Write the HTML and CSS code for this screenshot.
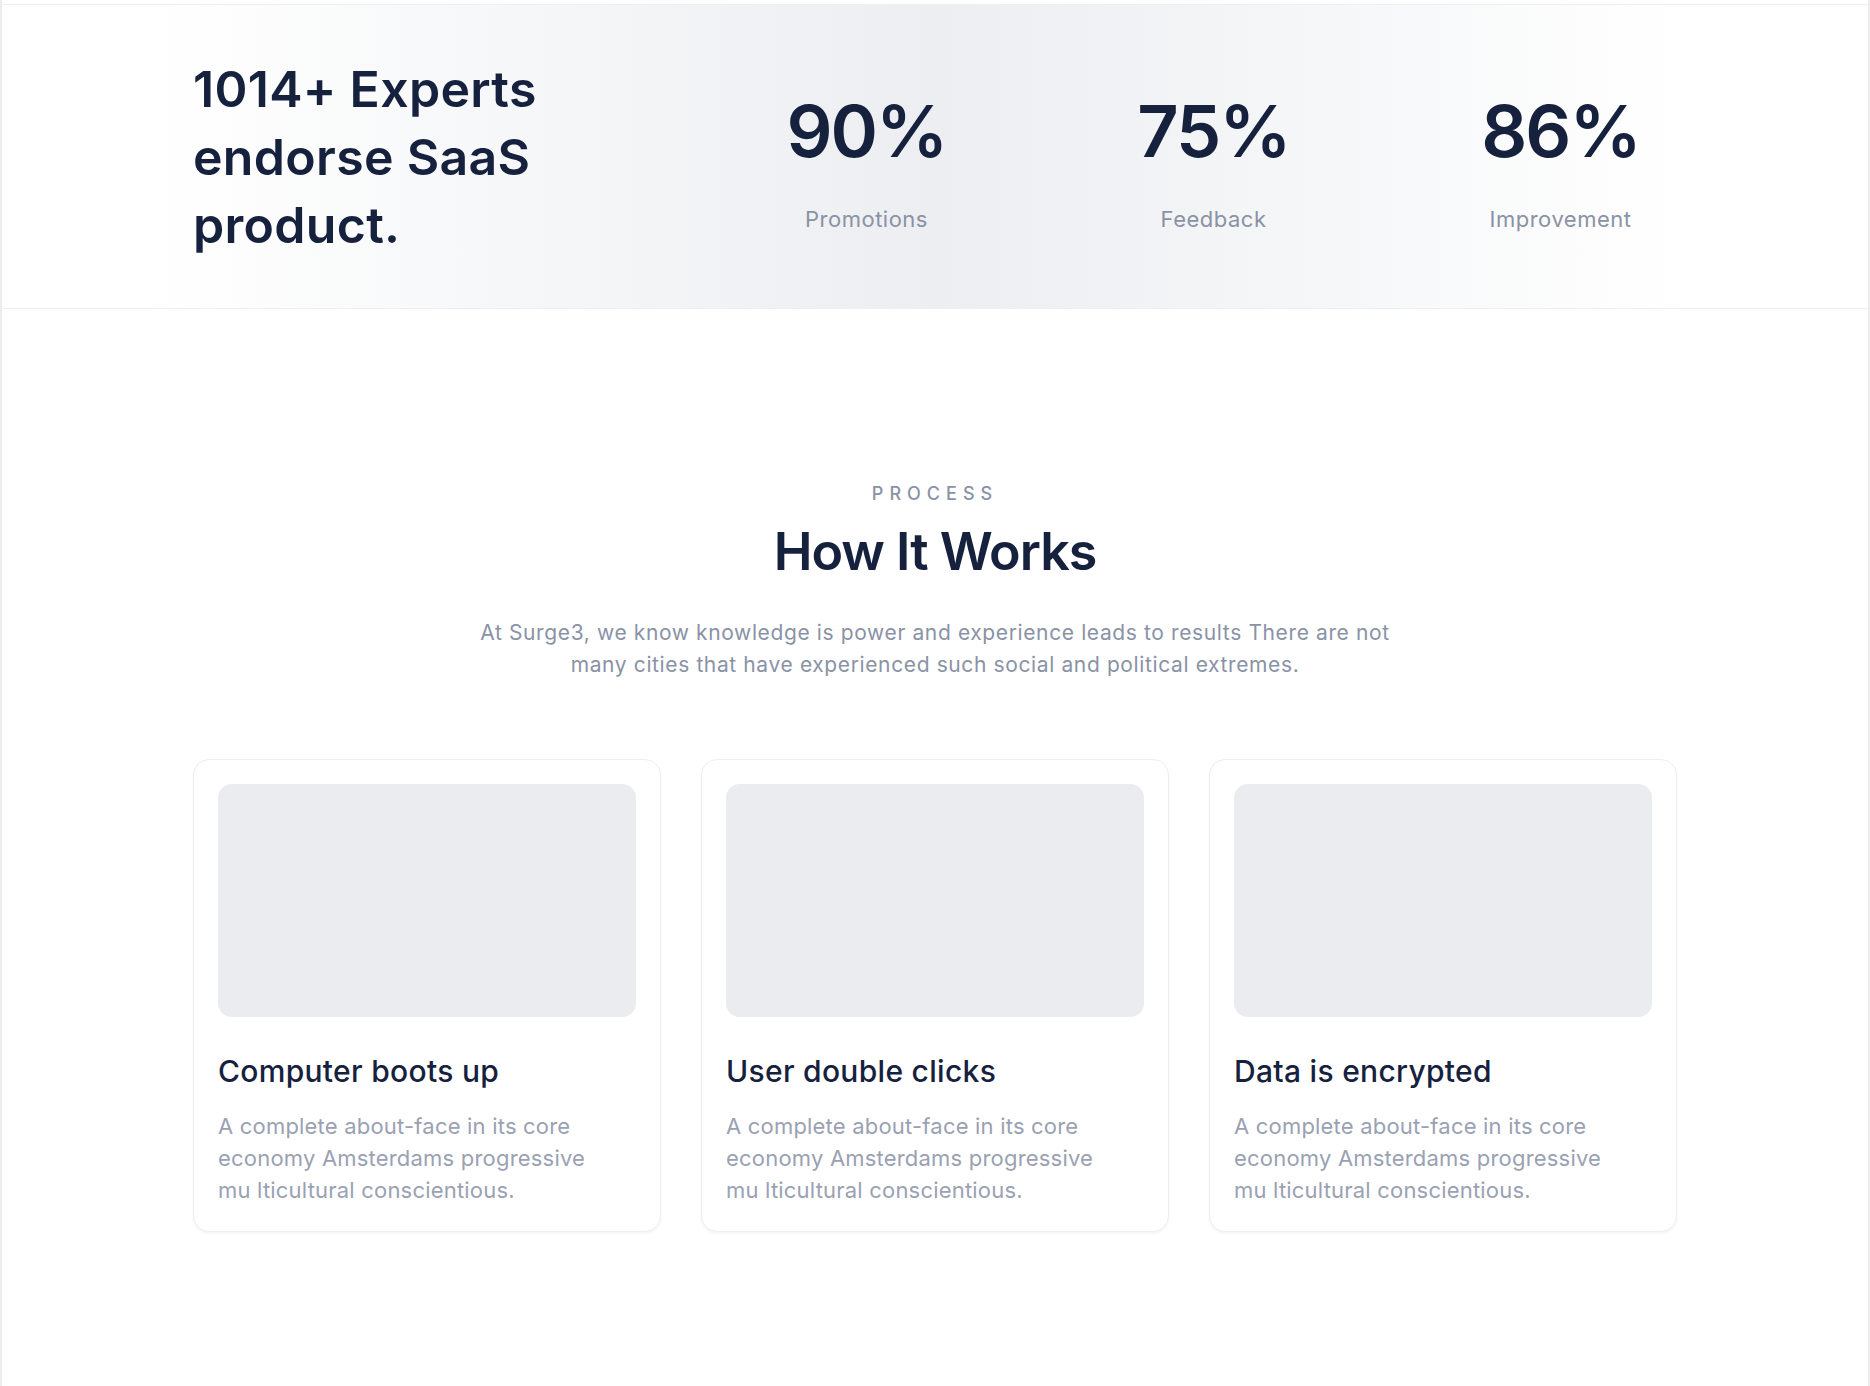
FILE: index.html
```html
<!DOCTYPE html>
<html lang="en">
<head>
<meta charset="utf-8">
<title>How It Works</title>
<link rel="stylesheet" href="styles.css">
</head>
<body>
<div class="page">
  <section class="stats">
    <div class="stats-inner">
      <h2 class="stats-title">1014+ Experts<br>endorse SaaS<br>product.</h2>
      <div class="stat">
        <div class="stat-value">90%</div>
        <div class="stat-label">Promotions</div>
      </div>
      <div class="stat">
        <div class="stat-value">75%</div>
        <div class="stat-label">Feedback</div>
      </div>
      <div class="stat">
        <div class="stat-value">86%</div>
        <div class="stat-label">Improvement</div>
      </div>
    </div>
  </section>

  <section class="process">
    <div class="eyebrow">PROCESS</div>
    <h1 class="process-title">How It Works</h1>
    <p class="process-lead">At Surge3, we know knowledge is power and experience leads to results There are not many cities that have experienced such social and political extremes.</p>

    <div class="cards">
      <article class="card">
        <div class="card-media"></div>
        <h3 class="card-title">Computer boots up</h3>
        <p class="card-text">A complete about-face in its core economy Amsterdams progressive mu lticultural conscientious.</p>
      </article>
      <article class="card">
        <div class="card-media"></div>
        <h3 class="card-title">User double clicks</h3>
        <p class="card-text">A complete about-face in its core economy Amsterdams progressive mu lticultural conscientious.</p>
      </article>
      <article class="card">
        <div class="card-media"></div>
        <h3 class="card-title">Data is encrypted</h3>
        <p class="card-text">A complete about-face in its core economy Amsterdams progressive mu lticultural conscientious.</p>
      </article>
    </div>
  </section>
</div>
</body>
</html>
```

FILE: styles.css
```css
* { box-sizing: border-box; }

html, body {
  margin: 0;
  padding: 0;
  background: #ffffff;
}

body {
  font-family: Inter, "Noto Sans", "Liberation Sans", sans-serif;
  color: #16213e;
}

.page {
  min-height: 1386px;
  border-left: 2px solid #ececec;
  border-right: 2px solid #ececec;
  padding-top: 4px;
}

.stats {
  border-top: 1px solid #efefef;
  border-bottom: 1px solid #efefef;
  height: 305px;
  background: linear-gradient(90deg, #ffffff 8%, #eceef1 50%, #ffffff 90%);
  display: flex;
  align-items: center;
}

.stats-inner {
  width: 1484px;
  margin: 0 auto;
  display: grid;
  grid-template-columns: 500px repeat(3, 347px);
  align-items: center;
}

.stats-title {
  margin: 0;
  font-size: 50px;
  line-height: 68px;
  font-weight: 600;
  letter-spacing: 0.3px;
  color: #16213e;
}

.stat {
  text-align: center;
  padding-top: 15px;
}

.stat-value {
  font-size: 72px;
  line-height: 72px;
  font-weight: 600;
  letter-spacing: -2px;
  color: #16213e;
}

.stat-label {
  margin-top: 37px;
  font-size: 22px;
  line-height: 30px;
  letter-spacing: 0.5px;
  color: #8a92a6;
}

.process {
  padding-top: 173px;
  text-align: center;
}

.eyebrow {
  font-size: 18px;
  line-height: 24px;
  letter-spacing: 6px;
  color: #8a92a6;
  font-weight: 500;
}

.process-title {
  margin: 15px 0 0;
  font-size: 52px;
  line-height: 62px;
  font-weight: 600;
  letter-spacing: -1px;
  color: #16213e;
}

.process-lead {
  margin: 34px auto 0;
  max-width: 940px;
  font-size: 21px;
  line-height: 32px;
  letter-spacing: 0.62px;
  color: #8a92a6;
}

.cards {
  width: 1484px;
  margin: 78px auto 0;
  display: grid;
  grid-template-columns: repeat(3, 1fr);
  gap: 40px;
  text-align: left;
}

.card {
  border: 1px solid #eceef1;
  border-radius: 16px;
  padding: 24px 24px 25px;
  background: #ffffff;
  box-shadow: 0 2px 3px rgba(20, 30, 60, 0.04);
}

.card-media {
  height: 233px;
  border-radius: 14px;
  background: #ebecef;
}

.card-title {
  margin: 36px 0 0;
  font-size: 30px;
  line-height: 36px;
  font-weight: 500;
  letter-spacing: 0.3px;
  color: #16213e;
}

.card-text {
  margin: 21px 0 0;
  font-size: 22px;
  line-height: 32px;
  letter-spacing: 0.2px;
  color: #9aa1b3;
  max-width: 390px;
}
```
